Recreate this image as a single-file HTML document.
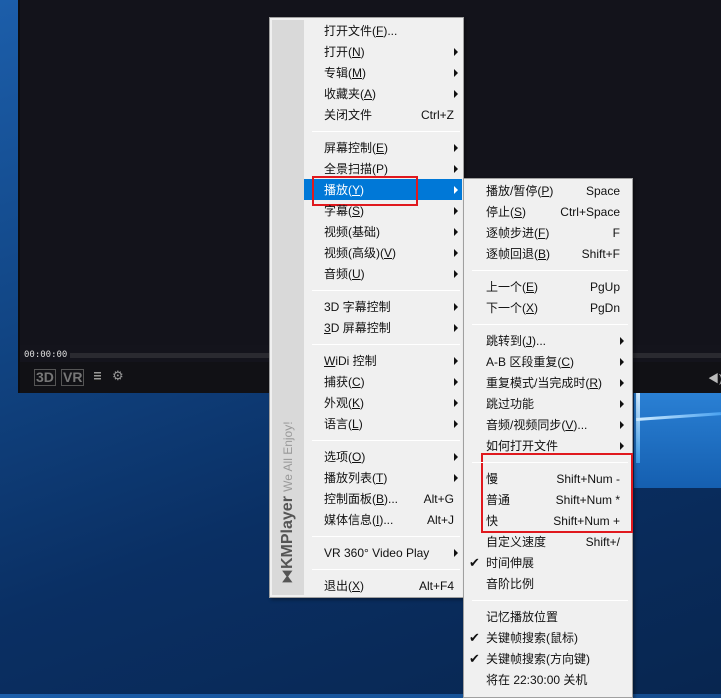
<!DOCTYPE html>
<html><head><meta charset="utf-8"><style>
*{margin:0;padding:0;box-sizing:border-box}
body{width:721px;height:694px;overflow:hidden;position:relative;font-family:"Liberation Sans","Noto Sans CJK SC",sans-serif;font-size:12px;color:#111;
background:linear-gradient(160deg,#1c5eaa 0%,#114584 35%,#0a2f63 65%,#082650 100%)}
.abs{position:absolute}
#player{left:18px;top:0;width:703px;height:393px;background:#14141c;border-left:2px solid #0c0c10}
#pane{left:634px;top:393px;width:87px;height:95px;background:linear-gradient(180deg,#2a80d4,#155fb0)}
.menu{background:#f0f0f0;border:1px solid #a0a0a0;box-shadow:2px 2px 3px rgba(0,0,0,.35)}
.it{position:absolute;height:21px;line-height:21px;white-space:nowrap}
.sc{position:absolute;height:21px;line-height:21px;text-align:right}
.ar{position:absolute;width:0;height:0;border-left:4px solid #111;border-top:4px solid transparent;border-bottom:4px solid transparent}
.sep{position:absolute;height:1px;background:#bdbdbd;border-bottom:1px solid #fff}
u{text-decoration:underline}
.chk{position:absolute;font-size:13px}
</style></head><body>
<div id="player" class="abs">
  <div class="abs" style="left:0;top:0;width:701px;height:345px;background:#13131b"></div>
  <div class="abs" style="left:4px;top:350px;font-size:9px;color:#ddd;font-family:'DejaVu Sans Mono',monospace">00:00:00</div>
  <div class="abs" style="left:50px;top:353px;width:651px;height:5px;background:#2a2a30"></div>
  <div class="abs" style="left:0;top:362px;width:701px;height:31px;background:#111115"></div>
  <div class="abs" style="left:14px;top:369px;font-size:14px;font-weight:bold;color:#777;border:1px solid #555;padding:0 1px;line-height:15px">3D</div>
  <div class="abs" style="left:41px;top:369px;font-size:14px;font-weight:bold;color:#777;border:1px solid #555;padding:0 1px;line-height:15px">VR</div>
  <div class="abs" style="left:74px;top:372px;width:7px;height:9px;background:repeating-linear-gradient(#999 0 1.5px,#111 1.5px 3px)"></div>
  <div class="abs" style="left:92px;top:368px;color:#999;font-size:13px">⚙</div>
  <div class="abs" style="left:688px;top:370px;color:#bbb;font-size:11px">◀)</div>
</div>
<div id="pane" class="abs"></div>
<div class="abs" style="left:636px;top:393px;width:4px;height:70px;background:linear-gradient(180deg,#cfe9ff,#3c9ae6)"></div>
<div class="abs" style="left:636px;top:418px;width:85px;height:3px;background:linear-gradient(90deg,#d0ecff,#4aa2f0);transform:rotate(-4deg);transform-origin:0 0"></div>

<div class="abs menu" style="left:269px;top:17px;width:195px;height:581px">
  <div class="abs" style="left:2px;top:2px;width:32px;height:575px;background:#d9d9d9"></div>
  <div class="abs" style="left:3px;top:566px;transform:rotate(-90deg);transform-origin:0 0;width:170px;height:30px;line-height:30px;white-space:nowrap;font-size:15px;color:#555"><span style="font-size:15px">⧓</span><b style="font-size:16px">KMPlayer</b> <span style="color:#999;font-size:12px">We All Enjoy!</span></div>
</div>
<div class="abs" style="left:304px;top:179px;width:158px;height:21px;background:#0078d7"></div>

<div class="abs menu" style="left:463px;top:178px;width:170px;height:520px"></div>

<div class="abs" style="left:312px;top:176px;width:106px;height:30px;border:2px solid #e0191e"></div>
<div class="abs" style="left:481px;top:453px;width:152px;height:80px;border:2px solid #e0191e"></div>

<script>
function add(html){document.body.insertAdjacentHTML('beforeend',html)}
function menu(items,x,scR,arX,sepX,sepW,startY,hl){
 var y=startY;
 items.forEach(function(it){
  if(it==='-'){add('<div class="sep" style="left:'+sepX+'px;top:'+(y+5)+'px;width:'+sepW+'px"></div>');y+=12;return;}
  var col=it.w?'#fff':'#111';
  add('<div class="it" style="left:'+x+'px;top:'+y+'px;color:'+col+'">'+it.t+'</div>');
  if(it.s)add('<div class="sc" style="right:'+(721-scR)+'px;top:'+y+'px;color:'+col+'">'+it.s+'</div>');
  if(it.a)add('<div class="ar" style="left:'+arX+'px;top:'+(y+6)+'px;border-left-color:'+col+'"></div>');
  if(it.c)add('<div class="chk" style="left:'+(x-17)+'px;top:'+(y+2)+'px">✔</div>');
  y+=21;
 });
}
menu([
 {t:'打开文件(<u>F</u>)...'},{t:'打开(<u>N</u>)',a:1},{t:'专辑(<u>M</u>)',a:1},{t:'收藏夹(<u>A</u>)',a:1},{t:'关闭文件',s:'Ctrl+Z'},'-',
 {t:'屏幕控制(<u>E</u>)',a:1},{t:'全景扫描(P)',a:1},{t:'播放(<u>Y</u>)',a:1,w:1},{t:'字幕(<u>S</u>)',a:1},{t:'视频(基础)',a:1},{t:'视频(高级)(<u>V</u>)',a:1},{t:'音频(<u>U</u>)',a:1},'-',
 {t:'3D 字幕控制',a:1},{t:'<u>3</u>D 屏幕控制',a:1},'-',
 {t:'<u>W</u>iDi 控制',a:1},{t:'捕获(<u>C</u>)',a:1},{t:'外观(<u>K</u>)',a:1},{t:'语言(<u>L</u>)',a:1},'-',
 {t:'选项(<u>O</u>)',a:1},{t:'播放列表(<u>T</u>)',a:1},{t:'控制面板(<u>B</u>)...',s:'Alt+G'},{t:'媒体信息(<u>I</u>)...',s:'Alt+J'},'-',
 {t:'VR 360° Video Play',a:1},'-',{t:'退出(<u>X</u>)',s:'Alt+F4'}
],324,454,454,312,148,21);
menu([
 {t:'播放/暂停(<u>P</u>)',s:'Space'},{t:'停止(<u>S</u>)',s:'Ctrl+Space'},{t:'逐帧步进(<u>F</u>)',s:'F'},{t:'逐帧回退(<u>B</u>)',s:'Shift+F'},'-',
 {t:'上一个(<u>E</u>)',s:'PgUp'},{t:'下一个(<u>X</u>)',s:'PgDn'},'-',
 {t:'跳转到(<u>J</u>)...',a:1},{t:'A-B 区段重复(<u>C</u>)',a:1},{t:'重复模式/当完成时(<u>R</u>)',a:1},{t:'跳过功能',a:1},{t:'音频/视频同步(<u>V</u>)...',a:1},{t:'如何打开文件',a:1},'-',
 {t:'慢',s:'Shift+Num -'},{t:'普通',s:'Shift+Num *'},{t:'快',s:'Shift+Num +'},{t:'自定义速度',s:'Shift+/'},{t:'时间伸展',c:1},{t:'音阶比例'},'-',
 {t:'记忆播放位置'},{t:'关键帧搜索(鼠标)',c:1},{t:'关键帧搜索(方向键)',c:1},{t:'将在 22:30:00 关机'}
],486,620,620,472,156,181);
</script>
</body></html>
